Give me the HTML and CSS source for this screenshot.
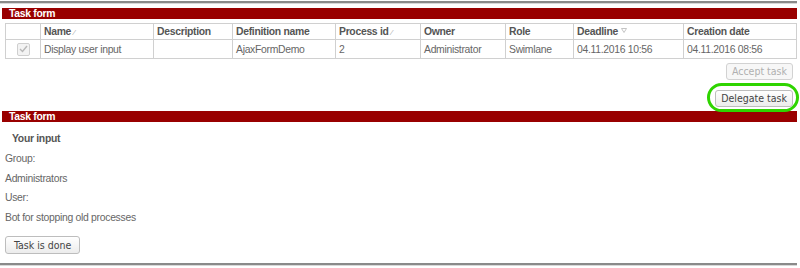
FILE: index.html
```html
<!DOCTYPE html>
<html>
<head>
<meta charset="utf-8">
<link rel="stylesheet" href="styles.css">
</head>
<body>
<div class="page">
  <div class="rule rule-top"></div>
  <div class="bar">Task form</div>
  <table class="tasks">
    <colgroup>
      <col style="width:35px"><col style="width:113px"><col style="width:79px"><col style="width:103px"><col style="width:85px"><col style="width:85px"><col style="width:68px"><col style="width:110px"><col>
    </colgroup>
    <thead>
      <tr>
        <th></th>
        <th>Name <span class="sort">&#8260;</span></th>
        <th>Description</th>
        <th>Definition name</th>
        <th>Process id <span class="sort">&#8260;</span></th>
        <th>Owner</th>
        <th>Role</th>
        <th>Deadline <svg class="tri" width="6" height="5" viewBox="0 0 6 5"><path d="M0.5 0.5 H5.5 L3 4.5 Z" fill="none" stroke="#b5b5b5" stroke-width="0.8"/></svg></th>
        <th>Creation date</th>
      </tr>
    </thead>
    <tbody>
      <tr>
        <td class="chk"><span class="box"><svg width="9" height="8" viewBox="0 0 9 8"><path d="M1 4 L3.5 6.5 L8 1" fill="none" stroke="#b8b8b8" stroke-width="1.4"/></svg></span></td>
        <td>Display user input</td>
        <td></td>
        <td>AjaxFormDemo</td>
        <td>2</td>
        <td>Administrator</td>
        <td>Swimlane</td>
        <td>04.11.2016 10:56</td>
        <td>04.11.2016 08:56</td>
      </tr>
    </tbody>
  </table>
  <div class="actions">
    <button class="btn btn-disabled">Accept task</button>
    <div class="delegate">
      <button class="btn">Delegate task</button>
      <span class="mark"></span>
    </div>
  </div>
  <div class="bar">Task form</div>
  <div class="form">
    <div class="heading">Your input</div>
    <p>Group:</p>
    <p>Administrators</p>
    <p>User:</p>
    <p>Bot for stopping old processes</p>
    <button class="btn btn-done">Task is done</button>
  </div>
  <div class="rule rule-bottom"></div>
</div>
</body>
</html>
```

FILE: styles.css
```css
html, body {
  margin: 0;
  padding: 0;
  background: #fff;
}
body {
  font-family: "Liberation Sans", Arial, sans-serif;
  font-size: 10.4px;
  letter-spacing: -0.3px;
  color: #666;
}
.page {
  width: 797px;
  padding-top: 1px;
}
.rule {
  height: 0;
  border-top: 2px solid #8a8a8a;
  border-bottom: 1px solid #d8d8d8;
}
.rule-top {
  margin-bottom: 4px;
}
.bar {
  margin-left: 2px;
  height: 11px;
  line-height: 11px;
  background: #990000;
  color: #fff;
  font-weight: bold;
  padding-left: 7px;
}
.tasks {
  margin: 4px 0 0 5px;
  width: 792px;
  border-collapse: collapse;
  table-layout: fixed;
}
.tasks th, .tasks td {
  border: 1px solid #d0d0d0;
  text-align: left;
  padding: 0 3px;
  white-space: nowrap;
  overflow: hidden;
}
.tasks th {
  height: 15px;
  font-weight: bold;
  color: #555;
}
.tasks td {
  height: 18px;
  color: #666;
}
.sort {
  color: #aaa;
  font-size: 8px;
  font-weight: normal;
}
.tri {
  vertical-align: 2px;
}
.tasks td.chk {
  text-align: center;
}
.box {
  display: inline-flex;
  align-items: center;
  justify-content: center;
  width: 11px;
  height: 11px;
  border: 1px solid #cfcfcf;
  border-radius: 2px;
  background: #f3f3f3;
  vertical-align: middle;
}
.actions {
  display: flex;
  flex-direction: column;
  align-items: flex-end;
  gap: 10px;
  margin: 4px 4px 4px 0;
}
.btn {
  box-sizing: border-box;
  font-family: "DejaVu Sans Condensed", "DejaVu Sans", sans-serif;
  font-stretch: condensed;
  font-size: 10.5px;
  letter-spacing: 0;
  color: #444;
  height: 17px;
  padding: 0 5px;
  line-height: 15px;
  border: 1px solid #bdbdbd;
  border-radius: 3px;
  background: linear-gradient(#ffffff, #ececec);
  margin: 0;
  display: block;
}
.btn-disabled {
  color: #b0b0b0;
  border-color: #d2d2d2;
  background: #f7f7f7;
}
.delegate {
  position: relative;
}
.mark {
  position: absolute;
  left: -8px;
  top: -7px;
  width: 86px;
  height: 23px;
  border: 3px solid #2fd400;
  border-radius: 15px;
}
.form {
  padding: 11px 0 0 5px;
}
.heading {
  font-weight: bold;
  color: #555;
  padding-left: 7px;
  line-height: 12px;
  margin-bottom: 4px;
}
.form p {
  margin: 0;
  line-height: 19.5px;
}
.btn-done {
  margin-top: 9px;
  height: 18px;
  padding: 0 8px;
}
.rule-bottom {
  margin-top: 9px;
}
```
